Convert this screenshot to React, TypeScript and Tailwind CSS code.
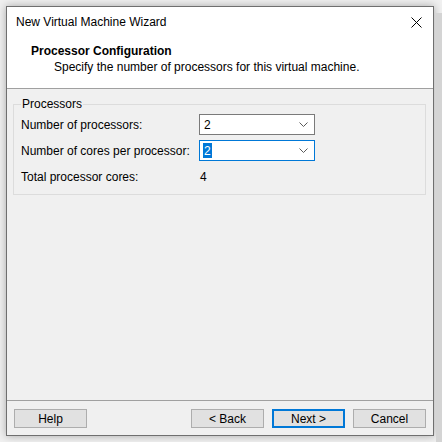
const font = { fontFamily: '"Liberation Sans", Arial, sans-serif' }

// combo box shaped like the Win32 drop-down list
function Combo({ focused }: { focused?: boolean }) {
  return (
    <div
      className={`flex h-[21px] w-[116px] items-center justify-between bg-white pl-[3px] pr-[5px] ${
        focused ? 'border border-[#0078d7]' : 'border border-[#7a7a7a]'
      }`}
    >
      {focused ? (
        <span className="flex h-[15px] items-center bg-[#0078d7] px-[1px] text-white">2</span>
      ) : (
        <span className="px-[1px]">2</span>
      )}
      <svg width="9" height="5" viewBox="0 0 9 5" className="mr-[1px]">
        <path d="M0.5 0.5L4.5 4.5L8.5 0.5" fill="none" stroke="#5a5a5a" strokeWidth="1" />
      </svg>
    </div>
  )
}

function Btn({ label, primary }: { label: string; primary?: boolean }) {
  return (
    <button
      className={`flex h-[19px] w-[73px] items-center justify-center bg-[#e1e1e1] text-[12px] text-black ${
        primary ? 'border-2 border-[#0078d7]' : 'border border-[#adadad]'
      }`}
    >
      {label}
    </button>
  )
}

export default function App() {
  return (
    <div className="flex h-[442px] w-[442px] flex-col bg-[#f0f0f0] text-[12px] text-black" style={font}>
      {/* strip of the app window behind the wizard */}
      <div className="h-[6px] shrink-0" />

      <div className="flex flex-1">
        <div className="ml-[6px] flex h-[430px] w-[428px] flex-col border border-[#6f6f6f] bg-[#f0f0f0] shadow-[0_0_8px_rgba(0,0,0,0.3)]">
          {/* title bar + header */}
          <div className="border-b border-[#a0a0a0] bg-white">
            <div className="flex h-[30px] items-center justify-between pl-[9px] pr-[10px]">
              <span>New Virtual Machine Wizard</span>
              <svg width="11" height="11" viewBox="0 0 11 11" className="mr-[1px]">
                <path d="M0.5 0.5L10.5 10.5M10.5 0.5L0.5 10.5" stroke="#000" strokeWidth="1" />
              </svg>
            </div>
            <div className="h-[51px] pl-[24px] pt-[6px] leading-[16px]">
              <div className="font-bold">Processor Configuration</div>
              <div className="ml-[23px]">Specify the number of processors for this virtual machine.</div>
            </div>
          </div>

          {/* body */}
          <div className="flex-1 px-[6px] pt-[7px]">
            <fieldset className="w-[413px] border border-[#dcdcdc] px-[7px] pb-[7px] pt-[2px]">
              <legend className="px-[1px] leading-[16px]">Processors</legend>
              <div className="flex flex-col gap-[5px]">
                <div className="flex h-[21px] items-center">
                  <span className="w-[178px]">Number of processors:</span>
                  <Combo />
                </div>
                <div className="flex h-[21px] items-center">
                  <span className="w-[178px]">Number of cores per processor:</span>
                  <Combo focused />
                </div>
                <div className="flex h-[21px] items-center">
                  <span className="w-[178px]">Total processor cores:</span>
                  <span className="pl-[1px]">4</span>
                </div>
              </div>
            </fieldset>
          </div>

          {/* buttons */}
          <div className="border-t border-[#a0a0a0] px-[7px] pb-[7px] pt-[8px]">
            <div className="flex items-center">
              <Btn label="Help" />
              <div className="ml-auto flex gap-[8px]">
                <Btn label="< Back" />
                <Btn label="Next >" primary />
                <Btn label="Cancel" />
              </div>
            </div>
          </div>
        </div>

        {/* window of the app behind, peeking out on the right */}
        <div className="ml-auto mt-[7px] w-[6px] bg-[#d4d4d4]" />
      </div>
    </div>
  )
}
